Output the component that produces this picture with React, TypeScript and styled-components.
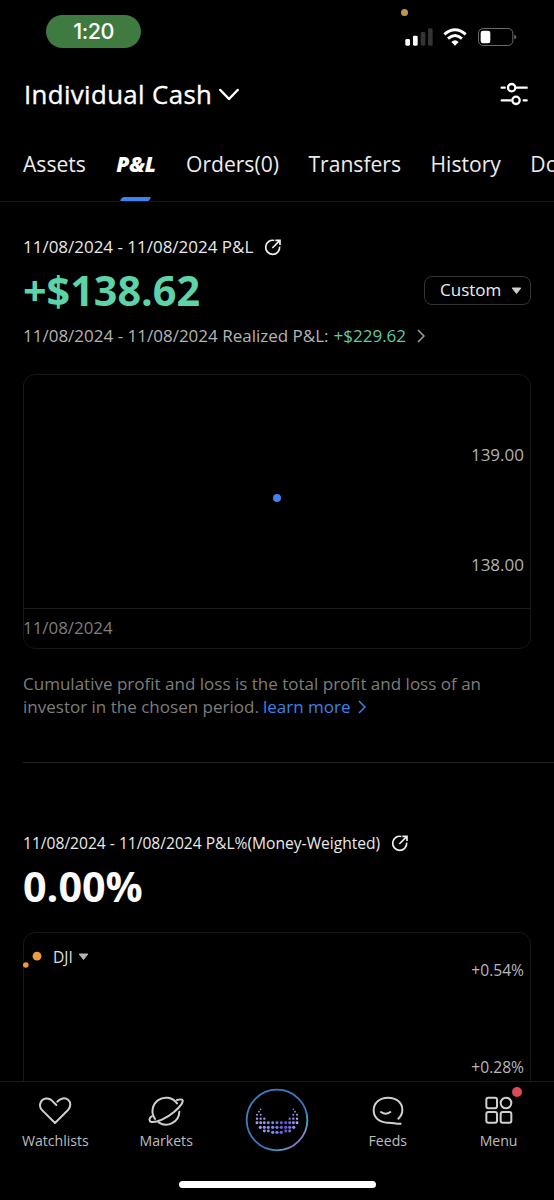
import React from "react";
import styled, { createGlobalStyle } from "styled-components";

const GlobalStyle = createGlobalStyle`
  * { box-sizing: border-box; }
  html, body { margin: 0; padding: 0; background: #000; }
  body { font-family: "Open Sans", sans-serif; color: #f4f4f4; overflow: hidden; }
  svg { display: block; flex: none; }
`;

const Screen = styled.div`
  width: 554px;
  height: 1200px;
  display: flex;
  flex-direction: column;
  background: #000;
  overflow: hidden;
  white-space: nowrap;
`;

const StatusBar = styled.header`
  position: relative;
  height: 64px;
  flex: none;
  display: flex;
  justify-content: space-between;
  align-items: flex-start;
  padding: 15px 37px 0 46px;
`;

const TimePill = styled.div`
  width: 95px;
  height: 33px;
  border-radius: 17px;
  background: #3f7b40;
  color: #fff;
  font: 500 21.5px/33px Inter, sans-serif;
  letter-spacing: -0.5px;
  text-align: center;
`;

const StatusIcons = styled.div`
  display: flex;
  align-items: center;
  gap: 10px;
  padding-top: 13px;
`;

const MicDot = styled.span`
  position: absolute;
  left: 401px;
  top: 9px;
  width: 7px;
  height: 7px;
  border-radius: 50%;
  background: #c4944a;
`;

const AccountBar = styled.div`
  height: 60px;
  flex: none;
  display: flex;
  align-items: center;
  justify-content: space-between;
  padding: 0 26px 0 24px;
`;

const AccountName = styled.h1`
  margin: 0;
  display: flex;
  align-items: center;
  gap: 7px;
  font-size: 25.8px;
  line-height: 60px;
  font-weight: 500;
  letter-spacing: 0.38px;
  -webkit-text-stroke: 0.35px #fff;
  color: #fff;
`;

const Tabs = styled.nav`
  height: 78px;
  flex: none;
  display: flex;
  gap: 29.5px;
  padding: 2px 0 0 23px;
  border-bottom: 1px solid #161616;
`;

const Tab = styled.div<{ $active?: boolean }>`
  position: relative;
  flex: none;
  margin: ${(p) => (p.$active ? "0 0.5px 0 0.9px" : "0")};
  font-size: 21.1px;
  line-height: 75px;
  color: ${(p) => (p.$active ? "#fff" : "#ececec")};
  font-weight: ${(p) => (p.$active ? 800 : 400)};
  font-style: ${(p) => (p.$active ? "italic" : "normal")};
`;

const TabMarker = styled.span`
  position: absolute;
  left: 50%;
  bottom: 0;
  width: 29px;
  height: 4px;
  margin-left: -15px;
  border-radius: 2px 1px 1px 1px;
  transform: skewX(-30deg);
  background: #3f82f0;
`;

const Content = styled.main`
  flex: 1;
  min-height: 0;
  overflow: hidden;
  padding: 33px 0 0 23px;
`;

const Period = styled.div<{ $size: number }>`
  display: flex;
  align-items: center;
  gap: 10.5px;
  height: 24px;
  font-size: ${(p) => p.$size}px;
  line-height: 24px;
  color: #e9e9e9;
`;

const AmountRow = styled.div`
  height: 64px;
  display: flex;
  align-items: center;
  justify-content: space-between;
  padding: 0 23px 2px 0;
`;

const Amount = styled.div<{ $gain?: boolean }>`
  font-size: 41.3px;
  line-height: 62px;
  font-weight: 700;
  color: ${(p) => (p.$gain ? "#5ed3a8" : "#fafafa")};
`;

const RangeButton = styled.button`
  width: 107px;
  height: 29px;
  display: flex;
  align-items: center;
  justify-content: space-between;
  padding: 0 8px 0 15px;
  border: 1px solid #353535;
  border-radius: 8px;
  background: transparent;
  color: #ededed;
  font: 400 17px/26px "Open Sans", sans-serif;

  svg {
    margin-top: 2px;
  }
`;

const Realized = styled.div`
  display: flex;
  align-items: center;
  height: 26px;
  font-size: 17px;
  line-height: 26px;
  color: #b4b4b4;
`;

const Gain = styled.span`
  color: #5ecba4;
  margin: 0 11px 0 5px;
`;

const Card = styled.section<{ $height: number; $top: number }>`
  width: 508px;
  height: ${(p) => p.$height}px;
  margin-top: ${(p) => p.$top}px;
  border: 1px solid #171717;
  border-radius: 12px;
`;

const Plot = styled.div`
  height: 234px;
  display: flex;
  align-items: center;
  justify-content: space-between;
  border-bottom: 1px solid #1c1c1c;
  padding: 12px 6px 0 249px;
`;

const Point = styled.span`
  width: 8px;
  height: 8px;
  border-radius: 50%;
  background: #3f82f0;
`;

const Axis = styled.div`
  align-self: flex-start;
  margin-top: 56px;
  display: flex;
  flex-direction: column;
  gap: 86px;
  font-size: 17px;
  line-height: 24px;
  color: #b2b2b2;
`;

const AxisDate = styled.div`
  margin-left: -1px;
  font-size: 16.9px;
  line-height: 37px;
  color: #7e7e7e;
`;

const Note = styled.p`
  margin: 23px 0 0;
  font-size: 17.03px;
  line-height: 23px;
  color: #7d7d7d;
`;

const NoteLine = styled.span`
  display: flex;
  align-items: center;
`;

const Link = styled.a`
  display: inline-flex;
  align-items: center;
  gap: 7px;
  margin-left: 4px;
  color: #3f82e8;
`;

const Divider = styled.hr`
  height: 1px;
  margin: 44px 0 68px;
  border: 0;
  background: #222;
`;

const BenchmarkBody = styled.div`
  display: flex;
  justify-content: space-between;
  padding: 12px 6px 0 0;
`;

const Benchmark = styled.div`
  display: flex;
  align-items: center;
  height: 24px;
  margin-left: -1px;
  font-size: 15.6px;
  line-height: 24px;
  color: #dedede;
`;

const BenchmarkName = styled.span`
  margin: 0 5px 0 6px;
`;

const PercentAxis = styled.div`
  margin-top: 13px;
  display: flex;
  flex-direction: column;
  gap: 73px;
  font-size: 15.6px;
  line-height: 24px;
  color: #b8b8b8;
`;

const BottomBar = styled.nav`
  height: 119px;
  flex: none;
  border-top: 1px solid #191919;
  display: grid;
  grid-template-columns: repeat(5, 1fr);
  grid-template-rows: 99px 19px;
  justify-items: center;
`;

const NavItem = styled.div`
  position: relative;
  display: flex;
  flex-direction: column;
  align-items: center;
  padding-top: 12px;
  font-size: 14.1px;
  line-height: 22px;
  color: #bdbdbd;
`;

const NavIcon = styled.svg`
  margin-bottom: 2px;
`;

const LogoSlot = styled.div`
  padding-top: 6px;
`;

const Badge = styled.span`
  position: absolute;
  top: 5px;
  right: -4px;
  width: 10px;
  height: 10px;
  border-radius: 50%;
  background: #dc4a58;
`;

const HomeIndicator = styled.div`
  grid-column: 1 / -1;
  width: 197px;
  height: 7px;
  border-radius: 4px;
  background: #fff;
`;

const ShareIcon = () => (
  <svg width="18" height="18" viewBox="0 0 54 54" fill="none" stroke="#efefef" strokeWidth="5">
    <path d="M31 7.5A21 21 0 1 0 47 26" />
    <path d="M25 30L47 8M34 7h14v14" />
  </svg>
);

const Caret = ({ color }: { color: string }) => (
  <svg width="11" height="8" viewBox="0 0 11 8">
    <path d="M1.2 1h8.6L5.5 6.5z" fill={color} stroke={color} strokeLinejoin="round" />
  </svg>
);

const Chevron = ({ color }: { color: string }) => (
  <svg width="8" height="14" viewBox="0 0 8 14" fill="none" stroke={color} strokeWidth="1.5">
    <path d="M1 1l6 6-6 6" />
  </svg>
);

// Each entry is a row of the logo: its y, the dot radius and the mirrored x offsets.
const dotRows: [number, number, number[]][] = [
  [-32, 2.4, [49]],
  [-25, 2.7, [54]],
  [-16, 3, [49, 60]],
  [-4, 3.5, [38, 49, 60]],
  [8, 4.4, [0, 13, 26, 38, 49, 60]],
  [22, 4.8, [0, 13, 26, 38, 50]],
  [33, 4.4, [26, 38]],
  [37, 5, [0, 13]],
];

const Logo = () => (
  <svg width="64" height="64" viewBox="-96 -96 192 192">
    <defs>
      <linearGradient id="ring" x1="0" y1="0" x2="1" y2="1">
        <stop offset="0" stopColor="#3f7fc0" />
        <stop offset="0.62" stopColor="#3f74b8" />
        <stop offset="0.78" stopColor="#4fa3c4" />
        <stop offset="0.86" stopColor="#9a72c4" />
        <stop offset="1" stopColor="#3f7fc0" />
      </linearGradient>
      <linearGradient id="dots" gradientUnits="userSpaceOnUse" x1="-60" y1="0" x2="60" y2="0">
        <stop offset="0" stopColor="#a99af0" />
        <stop offset="0.45" stopColor="#7d83ee" />
        <stop offset="0.7" stopColor="#6a4fd8" />
        <stop offset="1" stopColor="#9fb0f4" />
      </linearGradient>
    </defs>
    <circle r="91" fill="none" stroke="url(#ring)" strokeWidth="5.5" />
    <g fill="url(#dots)">
      {dotRows.flatMap(([y, r, xs]) =>
        xs.flatMap((x) => (x ? [-x, x] : [0]).map((cx) => <circle key={`${cx}:${y}`} cx={cx} cy={y} r={r} />))
      )}
    </g>
  </svg>
);

const iconStroke = {
  fill: "none",
  stroke: "#d0d0d0",
  strokeWidth: 6,
  strokeLinecap: "round" as const,
  strokeLinejoin: "round" as const,
};

export default function App() {
  return (
    <Screen>
      <GlobalStyle />
      <StatusBar>
        <TimePill>1:20</TimePill>
        <MicDot />
        <StatusIcons>
          <svg width="28" height="18" viewBox="0 0 84 54">
            <rect x="1" y="33" width="14" height="20" rx="4" fill="#fff" />
            <rect x="24" y="23" width="14" height="30" rx="4" fill="#fff" />
            <rect x="47" y="12" width="14" height="41" rx="4" fill="#333" />
            <rect x="69" y="1" width="14" height="52" rx="4" fill="#333" />
          </svg>
          <svg width="24" height="18" viewBox="0 0 72 54" fill="none" stroke="#fff" strokeWidth="8.5">
            <path d="M4 19Q36 -9 68 19" />
            <path d="M15 32Q36 13 57 32" />
            <path d="M25 42Q36 32 47 42L36 53z" fill="#fff" stroke="none" />
          </svg>
          <svg width="40" height="18" viewBox="0 0 120 54">
            <rect x="4.5" y="1.5" width="103" height="51" rx="14" fill="none" stroke="#6c6c6c" strokeWidth="3" />
            <rect x="11" y="8" width="29" height="38" rx="7" fill="#fff" />
            <path d="M112 20q6 2 6 7t-6 7z" fill="#6c6c6c" />
          </svg>
        </StatusIcons>
      </StatusBar>

      <AccountBar>
        <AccountName>
          Individual Cash
          <svg width="20" height="13" viewBox="0 0 60 39" fill="none" stroke="#fff" strokeWidth="7.5" strokeLinecap="round" strokeLinejoin="round">
            <path d="M4 6l26 27L56 6" />
          </svg>
        </AccountName>
        <svg width="28" height="24" viewBox="0 0 84 72" fill="none" stroke="#fff" strokeWidth="7" strokeLinecap="round">
          <path d="M5 17h9M51 17h29M5 55h27M71 55h9" />
          <circle cx="35" cy="17" r="11" />
          <circle cx="48" cy="55" r="11" />
        </svg>
      </AccountBar>

      <Tabs>
        <Tab>Assets</Tab>
        <Tab $active>
          P&amp;L
          <TabMarker />
        </Tab>
        <Tab>Orders(0)</Tab>
        <Tab>Transfers</Tab>
        <Tab>History</Tab>
        <Tab>Documents</Tab>
      </Tabs>

      <Content>
        <Period $size={16.98}>
          11/08/2024 - 11/08/2024 P&amp;L
          <ShareIcon />
        </Period>
        <AmountRow>
          <Amount $gain>+$138.62</Amount>
          <RangeButton>
            Custom
            <Caret color="#cfcfcf" />
          </RangeButton>
        </AmountRow>
        <Realized>
          11/08/2024 - 11/08/2024 Realized P&amp;L:
          <Gain>+$229.62</Gain>
          <Chevron color="#a0a0a0" />
        </Realized>

        <Card $height={275} $top={25}>
          <Plot>
            <Point />
            <Axis>
              <span>139.00</span>
              <span>138.00</span>
            </Axis>
          </Plot>
          <AxisDate>11/08/2024</AxisDate>
        </Card>

        <Note>
          <NoteLine>Cumulative profit and loss is the total profit and loss of an</NoteLine>
          <NoteLine>
            investor in the chosen period.
            <Link>
              learn more
              <Chevron color="#3f82e8" />
            </Link>
          </NoteLine>
        </Note>

        <Divider />

        <Period $size={15.6}>
          11/08/2024 - 11/08/2024 P&amp;L%(Money-Weighted)
          <ShareIcon />
        </Period>
        <AmountRow>
          <Amount>0.00%</Amount>
        </AmountRow>
        <Card $height={220} $top={13}>
          <BenchmarkBody>
            <Benchmark>
              <svg width="24" height="24" viewBox="0 0 24 24" fill="#ef9a3c">
                <circle cx="14" cy="11.2" r="4.4" />
                <circle cx="2.8" cy="20" r="2.8" />
              </svg>
              <BenchmarkName>DJI</BenchmarkName>
              <Caret color="#b5b5b5" />
            </Benchmark>
            <PercentAxis>
              <span>+0.54%</span>
              <span>+0.28%</span>
            </PercentAxis>
          </BenchmarkBody>
        </Card>
      </Content>

      <BottomBar>
        <NavItem>
          <NavIcon width="36" height="34" viewBox="112 72 108 102" {...iconStroke}>
            <path d="M170 105L156 91C146 82 130 84 124 95C118 106 122 115 128 121L166 159L205 120C213 111 215 98 206 90C196 82 182 84 173 95" />
          </NavIcon>
          Watchlists
        </NavItem>
        <NavItem>
          <NavIcon width="36" height="34" viewBox="446 71 108 102" {...iconStroke}>
            <path d="M467 146A40 40 0 1 1 533 99M540 124A40 40 0 0 1 478 156" />
            <path d="M457 138C449 143 448 153 456 155C472 157 502 144 524 125C544 108 555 93 548 88C544 86 540 87 533 89" />
          </NavIcon>
          Markets
        </NavItem>
        <LogoSlot>
          <Logo />
        </LogoSlot>
        <NavItem>
          <NavIcon width="36" height="34" viewBox="78 132 108 102" {...iconStroke}>
            <path d="M163 206C172 198 175 188 175 180C175 158 157 143 132 143C107 143 89 159 89 181C89 204 107 217 130 218C146 217 155 222 170 221" />
            <path d="M111 186Q125 196 139 186" />
          </NavIcon>
          Feeds
        </NavItem>
        <NavItem>
          <NavIcon width="36" height="34" viewBox="410 132 108 102" {...iconStroke}>
            <rect x="426" y="143" width="32" height="32" rx="6" />
            <circle cx="485" cy="159" r="16" />
            <rect x="426" y="186" width="32" height="32" rx="6" />
            <rect x="469" y="186" width="32" height="32" rx="6" />
          </NavIcon>
          Menu
          <Badge />
        </NavItem>
        <HomeIndicator />
      </BottomBar>
    </Screen>
  );
}
